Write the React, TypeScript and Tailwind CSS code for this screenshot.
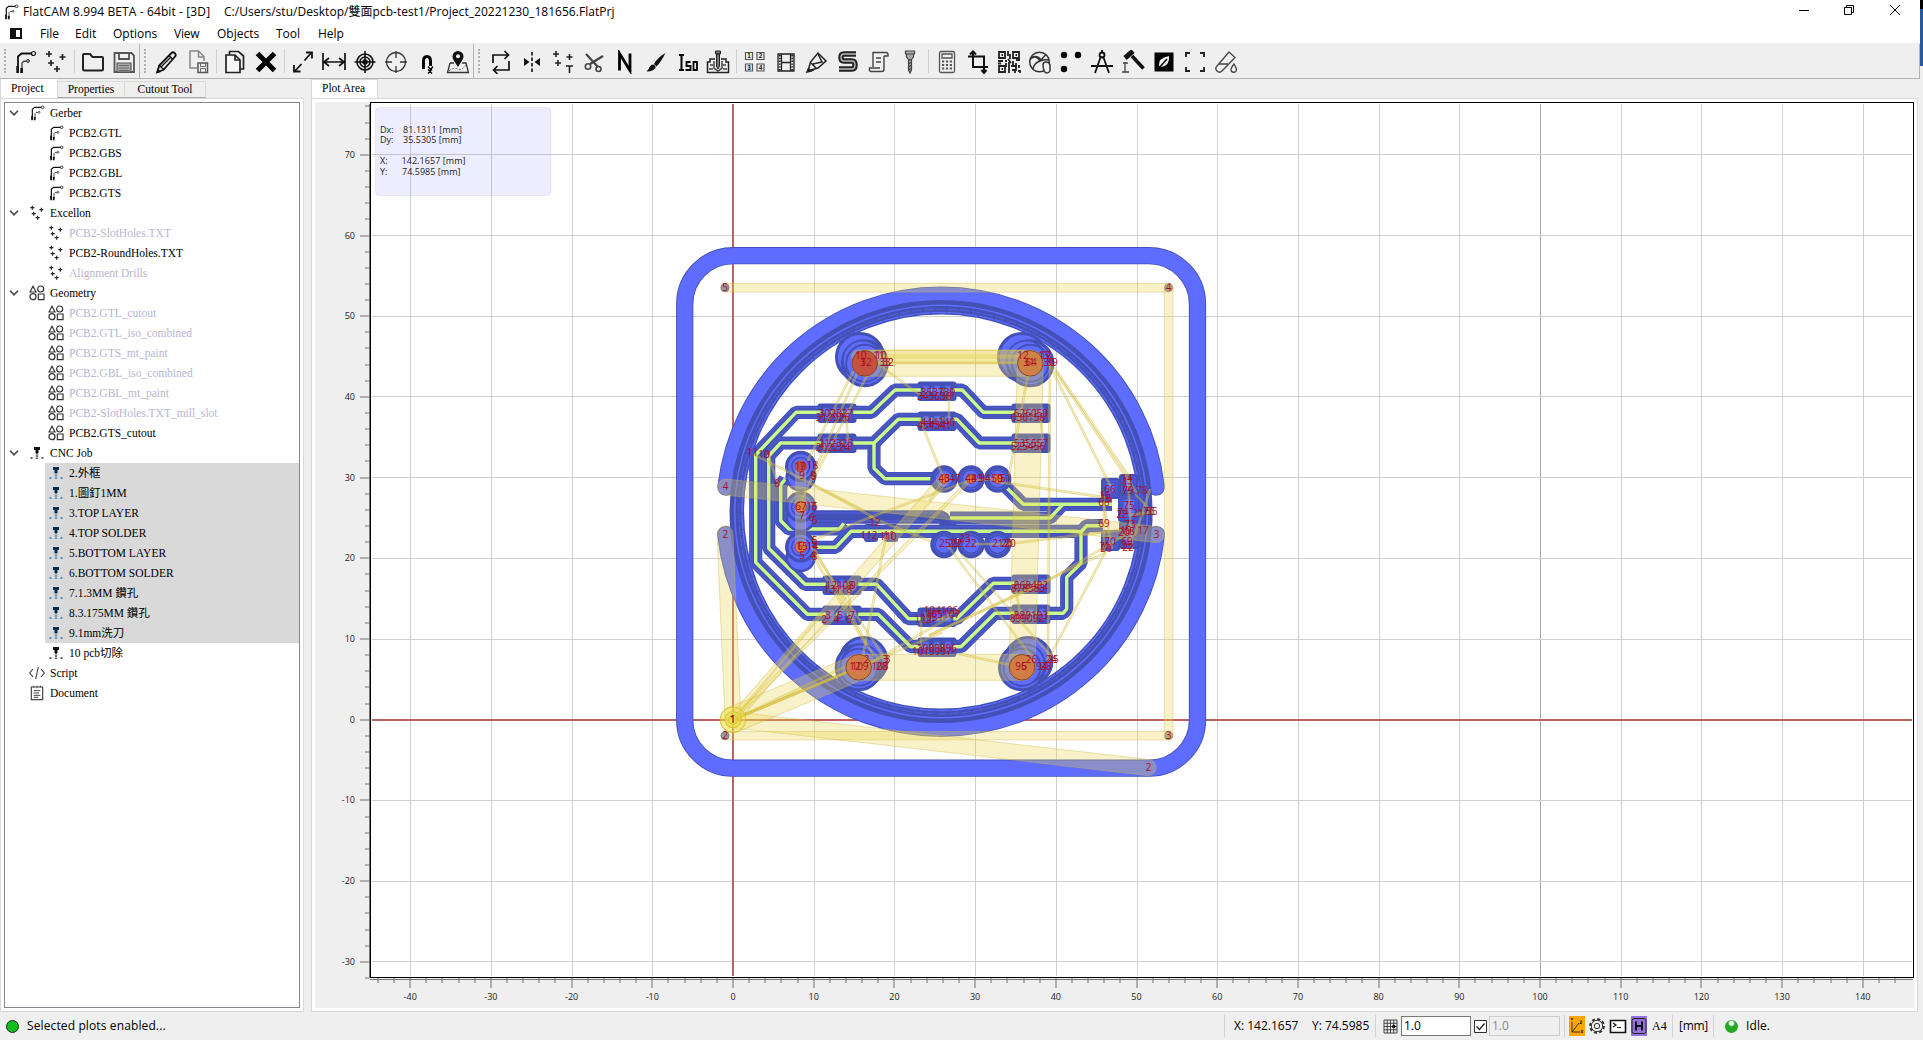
import React from 'react';

const UI = "font-['Open_Sans','Noto_Sans_CJK_TC',sans-serif]";
const SERIF = "font-['Liberation_Serif','Noto_Sans_CJK_TC',serif]";

/* ---------- icons ---------- */

const icons: Record<string, React.ReactNode> = {
  gerber: (
    <g fill="none" stroke="#111" strokeWidth="2">
      <circle cx="20.500" cy="3.500" r="2" strokeWidth="1.200" />
      <path d="M18.500 3.500H8.500L5 6.500V21" strokeWidth="1.800" />
      <circle cx="15" cy="11" r="1.400" strokeWidth="1" />
      <path d="M13.500 11.200h-2.700L9 13v8" stroke="#444" strokeWidth="1.400" />
      <path d="M4.600 16v7M8.600 18v5" strokeWidth="2.600" />
    </g>
  ),
  excellon: (
    <path d="M5 1v6M2 4h6M18.500 4v6M15.500 7h6M7 10v6M4 13h6M13 16v6M10 19h6" stroke="#222" strokeWidth="1.700" />
  ),
  open: <path d="M2 19V5q0-1 1-1h6l2.500 3H21q1 0 1 1v11q0 1.500-1.500 1.500h-17Q2 20.500 2 19z" fill="none" stroke="#222" strokeWidth="2" />,
  save: (
    <g fill="none" stroke="#555" strokeWidth="1.800">
      <path d="M2.500 3h17l2.500 2.500V22H2.500z" />
      <path d="M7 3v6h10V3" />
      <path d="M5 13h14v9H5z" fill="#aaa" strokeWidth="1.200" />
      <path d="M7 15.500h10M7 18h10M7 20.500h10" stroke="#666" strokeWidth="1" />
    </g>
  ),
  pencil: (
    <g fill="none" stroke="#111" strokeWidth="1.800">
      <path d="M2.500 22l1.700-6.500L16.500 3q1.500-1.500 3.300.2 1.700 1.800.3 3.300L8.500 19.800z" />
      <path d="M14 5.500l4 4M6 17L16 7M4 15.500l5 4" strokeWidth="1.400" />
      <path d="M2.300 22.200l2-.6-1.400-1.500z" fill="#111" />
    </g>
  ),
  filesave: (
    <g fill="none" stroke="#888" strokeWidth="1.500">
      <path d="M11 18H4V1h8.500L18 6.500V11" />
      <path d="M12.500 1v6H18" />
      <path d="M12 13h9.500v9.500H12z" stroke="#555" />
      <path d="M14.500 13v3.500h5V13M14.500 22v-3.500h5V22" stroke="#666" strokeWidth="1" />
    </g>
  ),
  copy: (
    <g fill="none" stroke="#222" strokeWidth="1.700">
      <path d="M3 22.500V5h9l5 5v12.500z" fill="#f6f6f6" />
      <path d="M12 5v5h5" />
      <path d="M6.500 5V1.500h9L20.500 6v13H17" />
    </g>
  ),
  del: <path d="M3.500 3.500l17 17M20.500 3.500l-17 17" stroke="#000" strokeWidth="5" />,
  fit: (
    <g stroke="#111" strokeWidth="1.800" fill="none">
      <path d="M3.500 21.500l7-7.500M13.500 10.500l7-8" />
      <path d="M15 2.500h6v6M3 15v6.500h6.500" />
    </g>
  ),
  dist: <path d="M1 3v17M23 3v17M2 12h20M7 8l-5 4 5 4M17 8l5 4-5 4" fill="none" stroke="#111" strokeWidth="1.700" />,
  target: (
    <g fill="none" stroke="#111" strokeWidth="1.600">
      <circle cx="12" cy="12" r="8" />
      <circle cx="12" cy="12" r="5" />
      <circle cx="12" cy="12" r="2" fill="#111" />
      <path d="M12 1v22M1.500 12h21" />
    </g>
  ),
  cross: (
    <g fill="none" stroke="#333" strokeWidth="1.300">
      <circle cx="12" cy="12" r="9.500" />
      <path d="M12 1v7M12 16v7M1 12h7M16 12h7" />
    </g>
  ),
  snap: (
    <g fill="none" stroke="#000" strokeWidth="3">
      <path d="M8.500 19v-8q0-4.500 3.500-4.500T15.500 11v5" />
      <path d="M13 16.500l2.500 3 2.500-3M13 23.500l4-4M13 19.500l4 4" strokeWidth="1.300" />
    </g>
  ),
  map: (
    <g>
      <path d="M4 13L1.500 22.500h21L20 13h-4M8 13H4" fill="none" stroke="#333" strokeWidth="1.300" />
      <path d="M3 21q5-4 9-2t8-4" fill="none" stroke="#666" strokeDasharray="2 1.500" />
      <path d="M12 17C9 12 6.500 9.500 6.500 6.500a5.500 5.500 0 0111 0C17.500 9.500 15 12 12 17z" fill="#111" />
      <circle cx="12" cy="6.300" r="2" fill="#efefef" />
    </g>
  ),
  twosided: (
    <path d="M4 13V5h15M15.500 1l4 4-4 4M20 11v9H5M8.500 16l-4 4 4 4" fill="none" stroke="#111" strokeWidth="1.700" />
  ),
  mirror: (
    <g>
      <path d="M12 2v20" stroke="#111" strokeWidth="1.600" strokeDasharray="3.500 2" />
      <path d="M4 8l5.500 4L4 16zM20 8l-5.500 4 5.500 4z" fill="#111" />
    </g>
  ),
  excT: (
    <g>
      <path d="M5 1v6M2 4h6M18.500 4v6M15.500 7h6M7 10v6M4 13h6" stroke="#222" strokeWidth="1.600" />
      <path d="M15 16h7M18.500 16v7" stroke="#222" strokeWidth="1.600" />
    </g>
  ),
  scissors: (
    <g fill="none" stroke="#444" strokeWidth="1.600">
      <path d="M4 4l12 13M21 6L8 14" strokeWidth="2.200" />
      <circle cx="6" cy="16.500" r="2.700" />
      <circle cx="16.500" cy="19" r="2.500" />
    </g>
  ),
  N: <path d="M6.500 20.500v-17L17 20.500v-17" fill="none" stroke="#000" strokeWidth="2.800" />,
  brush: (
    <g>
      <path d="M21.500 3Q13 8 10 14l2.500 2.500Q17 12 21.500 3z" fill="#111" />
      <path d="M9 14.500q3 1 2.500 3.500Q8 22 2.500 21.500 5 19.500 5.500 17 6.500 14.500 9 14.500z" fill="#111" />
    </g>
  ),
  iso: (
    <g fill="none" stroke="#000" strokeWidth="2">
      <path d="M4 5h5M4 20h5M6.500 5v15" />
      <path d="M15.500 12h-4v4h4v4h-5M18.500 12h3.500v8h-3.500z" strokeWidth="1.800" />
    </g>
  ),
  mill: (
    <g fill="none" stroke="#222" strokeWidth="1.500">
      <path d="M9 9H4v3H1.500v10.500h21V12H20V9h-5" />
      <path d="M8 11v7l4 3 4-3v-7M4 15h3M17 15h3M3 19h4M17 19h4" stroke="#444" />
      <path d="M9.500 1h5v3h-5zM10.500 4h3v12l-1.500 3-1.500-3z" fill="#777" stroke="#222" strokeWidth="1" />
    </g>
  ),
  panel: (
    <g>
      <path d="M2.500 2.500h7v7h-7zM14 2.500h7v7h-7zM2.500 14h7v7h-7zM14 14h7v7h-7z" fill="none" stroke="#555" strokeWidth="1.200" />
      <g fontSize="6.500" fontFamily="Liberation Sans" fontWeight="700" textAnchor="middle" fill="#111">
        <text x="6" y="8.300">1</text><text x="17.500" y="8.300">2</text>
        <text x="6" y="19.800">3</text><text x="17.500" y="19.800">4</text>
      </g>
    </g>
  ),
  film: (
    <g fill="none" stroke="#222">
      <path d="M4 4h16v17H4zM7.500 4v17M16.500 4v17M7.500 12.500h9" strokeWidth="1.300" />
      <path d="M5.700 5v16M18.300 5v16" strokeWidth="2" strokeDasharray="1.400 1.400" />
    </g>
  ),
  solder: (
    <g fill="none" stroke="#222" strokeWidth="1.500">
      <path d="M3 21l2.500-9L13 3l8 8-8 7z" />
      <path d="M13 4l4 8-9 2M6 13l5 5M3 21l6-1" />
      <path d="M2 22l4-1-2.500-2.500z" fill="#111" />
    </g>
  ),
  sub: (
    <g fill="none">
      <path d="M20 4H8Q5 4 5 7.500T8 11h8q3 0 3 4t-3 4H3" stroke="#222" strokeWidth="5.500" />
      <path d="M20 4H8Q5 4 5 7.500T8 11h8q3 0 3 4t-3 4H3" stroke="#bbb" strokeWidth="1.400" />
    </g>
  ),
  rules: (
    <g fill="none" stroke="#444" strokeWidth="1.400">
      <path d="M6 17V2.500h13q2.500 0 2 3.500h-4M17 6v13q0 2.500-2.500 2.500H4q-2 0-1.500-3.500H13" />
      <path d="M9 8h5M9 12h5" />
    </g>
  ),
  drill: (
    <g fill="#aaa" stroke="#444" strokeWidth="1.200">
      <path d="M7.500 1h9v3h-9zM8.500 4h7v3l-2 2.500h-3L8.500 7zM10.500 10h3v10L12 23l-1.500-3z" />
      <path d="M10.500 14l3-2M10.500 17l3-2M10.500 20l3-2" />
    </g>
  ),
  calc: (
    <g fill="none" stroke="#555" strokeWidth="1.300">
      <rect x="4.500" y="1.500" width="15" height="21" rx="1.500" />
      <path d="M7 4h10v4H7z" />
      <path d="M7 11.500h10M7 15h10M7 18.500h10" strokeWidth="2" strokeDasharray="2.200 1.700" />
    </g>
  ),
  crop: <path d="M7 2v15h15M2 6.500h16v15M4 4.500l3-3 3 3M15.500 20l2.500 3 2.500-3" fill="none" stroke="#111" strokeWidth="2" />,
  qr: (
    <g fill="none" stroke="#222" strokeWidth="1.800">
      <path d="M2 2h6v6H2zM16 2h6v6h-6zM2 16h6v6H2z" />
      <path d="M4.500 5h1.500M18.500 5H20M4.500 19H6M11 1v5M13 4v5M1 11h5M8 11h2M11 9l3 4M9 13v4M12 12v11M16 11v5M19 10h4M14 16h5M19 13v8M22 15v3M15 20h3v3M21 21h2v2M1 13.500h3" />
    </g>
  ),
  copper: (
    <g fill="none" stroke="#333" strokeWidth="1.500">
      <circle cx="11.500" cy="12" r="9.800" />
      <path d="M2.500 9Q8 4 12 11l6-6.500M12 11Q6 13 5 19M12 11q5-2 9-1M4 7q6-2 9 3" />
      <path d="M15 15q0-3 3-3t4 3v6q-1 2-3.500 2-3-.500-3.500-8z" fill="#efefef" />
    </g>
  ),
  fid: (
    <g fill="#000"><circle cx="5" cy="5" r="3.200" /><circle cx="19" cy="5" r="3.200" /><circle cx="5" cy="19" r="3.200" /></g>
  ),
  compass: (
    <g fill="none" stroke="#111" strokeWidth="1.800">
      <path d="M12 0v3M11 6L5 23M13 6l6 17M1 16h22" />
      <circle cx="12" cy="5" r="2.500" />
    </g>
  ),
  hammer: (
    <g fill="none" stroke="#111">
      <path d="M11 6l11.500 12.500" strokeWidth="3.600" />
      <path d="M4 8l8-7" strokeWidth="5" />
      <path d="M4 12v10M1 22h7M2 13h5" strokeWidth="1.300" stroke="#444" />
    </g>
  ),
  invert: (
    <g>
      <path d="M2.500 2.500h19v19h-19z" fill="#000" />
      <path d="M7 16Q6 8 17 6q1 10-8 11z" fill="#efefef" /><path d="M7 18L15 9" stroke="#000" strokeWidth="1.500" />
    </g>
  ),
  corners: <path d="M3 7V3h4M17 3h4v4M21 17v4h-4M7 21H3v-4" fill="none" stroke="#222" strokeWidth="1.900" />,
  etch: (
    <g fill="none" stroke="#444" strokeWidth="1.300">
      <path d="M15 2l6 5.500L8 21q-2.500 2.500-5 0t0-5z" />
      <path d="M5 14h9M20 14q-3 4-3 5.500a2.600 2.600 0 005.500 0Q22.500 18 20 14z" />
    </g>
  ),
  geometry: (
    <g fill="none" stroke="#333" strokeWidth="1.800">
      <path d="M1.500 10.500L6 2l4.500 8.500zM14 13.500h8.500V22H14z" />
      <circle cx="17.500" cy="6" r="4.500" /><circle cx="6" cy="17.500" r="4.500" />
    </g>
  ),
  script: <path d="M6 6l-5 6 5 6M18 6l5 6-5 6M14 3l-4 18" fill="none" stroke="#333" strokeWidth="1.600" />,
  document: (
    <g fill="none" stroke="#444" strokeWidth="1.800">
      <path d="M3.500 3h17v19h-17zM7 1v3M12 1v3M17 1v3" />
      <path d="M7 8.500h10M7 12h8M7 15.500h10M7 18.500h7" strokeWidth="1.500" />
    </g>
  ),
};

function Icon({ name, className = 'w-6 h-6' }: { name: string; className?: string }) {
  return <svg viewBox="0 0 24 24" className={'shrink-0 ' + className}>{icons[name]}</svg>;
}

function CncIcon({ selected }: { selected?: boolean }) {
  const c = selected ? '#0b2b4a' : '#111';
  return (
    <svg viewBox="0 0 16 16" className="w-4 h-4 shrink-0">
      <path d="M5 2h6v3H9.500v3h-3V5H5z" fill={c} />
      <path d="M8 8v6" stroke={selected ? '#5b8db8' : '#555'} strokeWidth="2.400" strokeDasharray="1.500 .7" />
      <path d="M1.500 12h2v2h-2zM12.500 12h2v2h-2z" fill={selected ? '#5b8db8' : '#666'} />
    </svg>
  );
}

/* ---------- toolbar ---------- */

const Sep = ({ w }: { w: 'w-[6px]' | 'w-[5px]' }) => (
  <div className={'flex shrink-0 justify-center ' + w}><div className="h-6 w-px bg-[#cfcfcf]" /></div>
);
const Handle = () => (
  <div className="flex w-3 shrink-0 items-center self-stretch">
    <div className="w-px self-stretch bg-[#b4b4b4]" />
    <div className="ml-1 h-6 border-l-2 border-dotted border-[#b0b0b0]" />
  </div>
);
const Tools = ({ names }: { names: string[] }) => (
  <>{names.map((n) => <div key={n} className="flex w-[31px] shrink-0 justify-center pt-[2px]"><Icon name={n} /></div>)}</>
);

function Toolbar() {
  return (
    <div className="flex h-[35px] w-[1920px] items-center border-r border-b border-[#b4b4b4] bg-[#efefef]">
      <div className="flex w-[9px] shrink-0 justify-center"><div className="h-6 border-l-2 border-dotted border-[#b0b0b0]" /></div>
      <Tools names={['gerber', 'excellon']} /><Sep w="w-[6px]" />
      <Tools names={['open', 'save']} /><Handle />
      <Tools names={['pencil', 'filesave']} /><Sep w="w-[6px]" />
      <Tools names={['copy', 'del']} /><Sep w="w-[6px]" />
      <Tools names={['fit', 'dist', 'target', 'cross', 'snap', 'map']} /><Handle />
      <Tools names={['twosided', 'mirror', 'excT', 'scissors', 'N', 'brush', 'iso', 'mill']} /><Sep w="w-[6px]" />
      <Tools names={['panel', 'film', 'solder', 'sub', 'rules', 'drill']} /><Sep w="w-[6px]" />
      <Tools names={['calc', 'crop', 'qr', 'copper', 'fid', 'compass', 'hammer', 'invert', 'corners', 'etch']} />
    </div>
  );
}

/* ---------- project tree ---------- */

type Item = { t: string; off?: boolean; sel?: boolean };
const groups: { t: string; icon: string; items: Item[] }[] = [
  { t: 'Gerber', icon: 'gerber', items: [{ t: 'PCB2.GTL' }, { t: 'PCB2.GBS' }, { t: 'PCB2.GBL' }, { t: 'PCB2.GTS' }] },
  { t: 'Excellon', icon: 'excellon', items: [{ t: 'PCB2-SlotHoles.TXT', off: true }, { t: 'PCB2-RoundHoles.TXT' }, { t: 'Alignment Drills', off: true }] },
  {
    t: 'Geometry', icon: 'geometry', items: [
      { t: 'PCB2.GTL_cutout', off: true }, { t: 'PCB2.GTL_iso_combined', off: true }, { t: 'PCB2.GTS_mt_paint', off: true },
      { t: 'PCB2.GBL_iso_combined', off: true }, { t: 'PCB2.GBL_mt_paint', off: true }, { t: 'PCB2-SlotHoles.TXT_mill_slot', off: true },
      { t: 'PCB2.GTS_cutout' },
    ],
  },
  {
    t: 'CNC Job', icon: 'cnc', items: [
      { t: '2.外框', sel: true }, { t: '1.圖釘1MM', sel: true }, { t: '3.TOP LAYER', sel: true }, { t: '4.TOP SOLDER', sel: true },
      { t: '5.BOTTOM LAYER', sel: true }, { t: '6.BOTTOM SOLDER', sel: true }, { t: '7.1.3MM 鑽孔', sel: true },
      { t: '8.3.175MM 鑽孔', sel: true }, { t: '9.1mm洗刀', sel: true }, { t: '10 pcb切除' },
    ],
  },
  { t: 'Script', icon: 'script', items: [] },
  { t: 'Document', icon: 'document', items: [] },
];

function Tree() {
  return (
    <div className={'flex-1 border border-[#828790] bg-white text-[11.5px] leading-5 ' + SERIF}>
      {groups.map((g) => (
        <div key={g.t}>
          <div className="flex h-5 items-center">
            <div className="flex w-[23px] justify-center pr-[5px]">
              {g.items.length > 0 && (
                <svg viewBox="0 0 10 6" className="h-1.5 w-2.5"><path d="M1 .8l4 4 4-4" fill="none" stroke="#444" strokeWidth="1.600" /></svg>
              )}
            </div>
            <div className="flex w-[22px] justify-center pr-1">{g.icon === 'cnc' ? <CncIcon /> : <Icon name={g.icon} className="h-4 w-4" />}</div>
            <span className="whitespace-pre">{g.t}</span>
          </div>
          {g.items.map((it) => (
            <div key={it.t} className="flex h-5 pl-10">
              <div className={'flex flex-1 items-center ' + (it.sel ? 'bg-[#d9d9d9]' : '')}>
                <div className="ml-[3px] mr-[5px] flex w-4 justify-center">
                  {g.icon === 'cnc' ? <CncIcon selected={it.sel} /> : <Icon name={g.icon} className="h-4 w-4" />}
                </div>
                <span className={'whitespace-pre ' + (it.off ? 'text-[#b6b6d0]' : 'text-black')}>{it.t}</span>
              </div>
            </div>
          ))}
        </div>
      ))}
    </div>
  );
}

/* ---------- plot ---------- */

const px = (v: number) => 733 + v * 8.07;
const py = (v: number) => 719.7 - v * 8.07;
const range = (a: number, b: number, s: number) => Array.from({ length: Math.floor((b - a) / s) + 1 }, (_, i) => a + i * s);

const traces = [
  'M1103 525.7H1086.700L1081 532V563.300L1066.700 577.300V609L1063 613.300H995L961 646.700H910.700L878.300 614.300H807.300L755.700 562.300V455L796 412.300H871.700L895 390H962.300L983.300 412.300H1045',
  'M1045 583.300H993.300L956.700 618.700H908.300L876.700 584.300H805L768.700 548.300V456L780.700 443H874L898.300 419.300H957L979.300 443H1045',
  'M874 443V468.300L885 478.700H944',
  'M785 479.300L780.700 485V520.700L789 529H839.300L844 523.300',
  'M815 547.300H835.700L851 531.300H1077L1081 532',
  'M950 518H1050L1063 504.300M998 479L1023.300 504.300H1112',
];

const pads: [number, number][] = [
  [937, 391], [937, 421], [837, 413], [837, 443], [1031, 413], [1031, 443], [842, 585], [842, 615], [937, 617], [937, 647], [1031, 584], [1031, 614],
];
const bigHoles: [number, number, number, number, string][] = [
  [860, 357, 864.7, 363.3, '#c4523f'], [1022, 357, 1030.3, 363.3, '#cf8044'], [863.5, 661, 858.7, 667.3, '#cf7d48'], [1028.500, 661, 1022, 667.3, '#cf7d44'],
];
const smallHoles: [number, number, boolean][] = [
  [800.7, 466.500, true], [800.7, 507, true], [800.7, 547, true], [944, 479, true], [971, 479, true], [997.7, 479, true],
  [944, 544.500, false], [971, 544.500, false], [997.500, 544.500, false],
];
const travels: [number, number, number, number, number][] = [
  [725, 287.700, 1168.600, 287.700, 8.700], [1168.600, 287.700, 1168.600, 735.700, 8.700], [725, 735.700, 1168.600, 735.700, 8.300],
  [733, 719.700, 1148, 767.500, 16], [733, 719.700, 725, 534, 16], [726, 487, 1156, 534.500, 16],
  [733, 719.700, 858.700, 667.300, 26], [858.700, 667.300, 1022, 667.300, 26], [1022, 667.300, 1030.300, 363.300, 26], [1030.300, 363.300, 864.700, 363.300, 26],
  [733, 719.700, 944, 479, 10], [733, 719.700, 971, 479, 3], [858, 356.500, 1030, 356.500, 3], [858, 356.500, 1022, 356.500, 13], [800.700, 466, 800.700, 547, 10],
];
const thin: [number, number, number, number][] = [
  [733, 719.7, 822, 614], [733, 719.7, 858, 667], [733, 719.7, 872, 662], [733, 719.7, 866, 657], [733, 719.7, 941, 633], [872, 662, 950, 617],
  [853, 372, 808, 460], [872, 366, 813, 480], [862, 362, 802, 500], [878, 364, 920, 395], [846, 412, 848, 441], [920, 420, 944, 479],
  [755, 455, 863, 510], [813, 485, 873, 517], [768, 455, 778, 483], [815, 550, 873, 655], [811, 547, 886, 660], [813, 556, 866, 645],
  [871, 517, 813, 540], [871, 517, 971, 480], [886, 536, 863, 655], [848, 585, 851, 612], [921, 622, 921, 645], [938, 620, 958, 610],
  [949, 394, 949, 417], [1030, 364, 1009, 475], [1050, 364, 1048, 660], [1041, 420, 1043, 440], [1053, 366, 1128, 475], [1056, 372, 1136, 492],
  [1049, 364, 1110, 485], [998, 482, 1103, 497], [971, 480, 1000, 479], [944, 479, 930, 500], [948, 546, 1030, 655], [962, 555, 1050, 655],
  [975, 544, 1010, 544], [1008, 544, 1120, 530], [1105, 553, 1048, 660], [1105, 553, 930, 635], [1128, 533, 1046, 582], [1046, 582, 930, 635],
  [1104, 497, 1104, 550], [1136, 495, 1152, 512], [1131, 515, 1152, 512], [1016, 592, 1020, 612], [960, 654, 1020, 667], [930, 541, 870, 517],
  [1128, 478, 1132, 550], [1150, 490, 1135, 535], [1104, 506, 1112, 548], [864, 363, 1030, 363],
];

const labels: [number, number, string][] = [
  [725, 287.700, '5'], [725.700, 487, '4'], [860.700, 356, '10'], [879, 356, '11'], [881, 356, '10'], [866, 363, '32'], [863, 363, '1'], [885, 363, '33'], [888, 363, '32'],
  [836, 414, '302827'], [833, 417.500, '312926'], [836, 443.500, '212325'], [833, 447.300, '202224'], [752.500, 452.700, '11'], [764, 455, '10'], [767, 454.500, '9'],
  [777, 483.500, '8'], [800.500, 466.700, '19'], [802, 466.700, '7'], [812.500, 466, '18'], [802, 476, '9'], [813, 476, '8'], [814, 477, '9'],
  [801, 506.700, '67'], [812, 506.700, '16'], [813, 506.700, '7'], [802, 515.500, '7'], [811.500, 518, '6'], [814.500, 520.500, '6'],
  [802, 547, '15'], [800, 547, '6'], [812.500, 547, '14'], [814.500, 541, '5'], [814, 543.500, '5'], [802, 556, '5'], [813, 556, '4'], [814.500, 557, '8'],
  [938, 392.700, '353739'], [934.500, 396.300, '343638'], [938, 422.500, '444240'], [934.500, 426, '454341'],
  [1023, 356, '12'], [1044, 356, '13'], [1046, 356, '12'], [1031, 363, '64'], [1029, 363, '31'], [1049, 363, '30'], [1052, 363, '39'],
  [1031, 414, '626059'], [1028, 417.500, '636158'], [1031, 443.500, '535557'], [1028, 447, '525456'],
  [944, 479, '46'], [947, 479, '3'], [955, 479, '47'], [971, 479, '48'], [977, 479, '49'], [985, 479, '94'], [997, 479, '50'], [1000, 479, '9'], [1006, 479, '51'],
  [1110, 490, '66'], [1105, 496, '16'], [1106, 498.500, '15'], [1104, 503, '68'], [1127, 479, '14'], [1128, 482, '11'], [1127, 487.500, '72'], [1128, 491, '79'], [1142, 491, '78'], [1129, 506, '75'],
  [1123, 513, '74'], [1122, 515, '22'], [1138, 514, '21'], [1149, 511.500, '76'], [1152, 512, '55'], [1104, 524, '69'], [1130, 525, '73'], [1126, 531, '19'], [1124, 533, '20'], [1129, 532, '18'], [1143, 531, '17'],
  [1110, 542, '70'], [1105, 547, '71'], [1106, 549, '20'], [1127, 542, '69'], [1127, 546, '25'], [1128, 548, '22'], [1156.500, 534.500, '3'], [725.300, 534.500, '2'],
  [875, 522.500, '12'], [869, 536, '112'], [888, 537, '110'], [889, 536, '11'], [945, 544, '25'], [954, 544, '29'], [957, 544, '22'], [965, 538.500, '23'], [971, 544, '22'], [998, 544, '21'], [1007, 544, '20'], [1010, 544, '20'],
  [840, 586, '12108'], [853, 586, '9'], [838, 589.500, '13118'], [828, 616, '3'], [840, 616, '5'], [852, 616, '7'], [824, 619.500, '2'], [836.500, 619.500, '4'], [849, 619.500, '6'],
  [1031, 585.500, '868482'], [1028, 589, '878583'], [1031, 616, '889193'], [1027, 619, '899092'],
  [941, 611, '104106'], [943, 615, '105107'], [923, 619.500, '102'], [929, 618, '103'], [937, 649, '1009896'], [932, 652, '1019997'],
  [866.500, 660, '2'], [885, 660, '3'], [887.500, 660, '3'], [860, 667, '109'], [855, 667, '12'], [880, 667, '108'], [882, 667, '28'],
  [1031.500, 660, '26'], [1051, 660, '24'], [1053, 660, '25'], [1021, 667, '95'], [1024, 667, '6'], [1042, 667, '94'], [1046, 667, '28'],
  [725, 736, '2'], [1168.600, 287.700, '4'], [1168.600, 735.700, '3'], [1148.500, 767.500, '2'],
];

const DARK = '#4350b6';
const BLUE = '#5e6dff';

function Bar({ v, w }: { v: [number, number, number, number]; w: number }) {
  const [x1, y1, x2, y2] = v;
  const len = Math.hypot(x2 - x1, y2 - y1);
  const a = (Math.atan2(y2 - y1, x2 - x1) * 180) / Math.PI;
  return <rect x={-w / 2} y={-w / 2} width={len + w} height={w} rx={w / 2} transform={`translate(${x1} ${y1}) rotate(${a})`} />;
}

function Plot() {
  const majorX = range(-40, 140, 10);
  const majorY = range(-30, 70, 10);
  return (
    <svg viewBox="315 102 1600 906" className="h-[906px] w-[1600px] shrink-0">
      <path d="M315 102h1600v906H315z" fill="#efefef" />
      <path d="M370 102h1545v906h-0.500V978H370z" fill="#fff" />
      <g shapeRendering="crispEdges">
        {majorX.map((v) => <path key={v} d={`M${Math.round(px(v)) + 0.5} 104V976`} stroke={v === 100 ? '#a8a8a8' : '#cfcfcf'} />)}
        {majorY.map((v) => <path key={v} d={`M372 ${Math.floor(py(v)) + 0.5}H1912`} stroke="#cfcfcf" />)}
        <path d="M733 104V976M372 720H1912" stroke="#bd6262" strokeWidth="2" />
        {range(-32, 76, 2).map((v) => <path key={v} d={`M${v % 10 === 0 ? 360 : 365} ${py(v)}H369`} stroke="#b0b0b0" strokeWidth="2" />)}
        {range(-44, 144, 2).map((v) => <path key={v} d={`M${px(v)} 978V${v % 10 === 0 ? 988 : 983}`} stroke="#b0b0b0" strokeWidth="2" />)}
        <path d="M369.500 104V978M370 979.500H1913" stroke="#777" />
        <path d="M370.500 977.500V102.500H1913.500V977.500z" fill="none" stroke="#000" />
      </g>
      <g fontSize="9" fontFamily="Open Sans" fill="#222">
        {majorY.map((v) => <text key={v} x="355" y={py(v) + 3} textAnchor="end">{v}</text>)}
        {majorX.map((v) => <text key={v} x={px(v)} y="999.800" textAnchor="middle">{v}</text>)}
      </g>

      {/* board outline and circular cutout */}
      <g fill="none" strokeLinecap="round">
        {[[17.3, DARK], [15.5, BLUE]].map(([w, c]) => (
          <g key={c} stroke={c as string} strokeWidth={w as number}>
            <rect x="684.700" y="255.700" width="512.800" height="512.500" rx="48.500" />
            <path d="M726 487A216.500 216.500 0 011156.200 487M725.800 534.500A216.500 216.500 0 001156.400 534.500" />
          </g>
        ))}
        <circle cx="941.100" cy="511.500" r="204.300" stroke={DARK} strokeWidth="14.500" />
        <circle cx="941.100" cy="511.500" r="206.300" stroke={BLUE} strokeWidth="1.500" />
        <circle cx="941.100" cy="511.500" r="202.300" stroke={BLUE} strokeWidth=".6" strokeDasharray="9 3" />
        <circle cx="941.100" cy="511.500" r="199" stroke={BLUE} strokeWidth="1.300" strokeDasharray="14 2" />
      </g>

      {/* pads */}
      <g stroke={DARK} strokeWidth="2">
        {pads.map(([x, y]) => (
          <g key={`${x}-${y}`} fill="#4a57cc">
            <rect x={x - 18.5} y={y - 8.5} width="37" height="17.500" rx="2" />
          </g>
        ))}
        {[[1102, 479, 17, 19], [1120, 475, 17, 19], [1119, 495, 20, 26], [1102, 531, 17, 19], [1120, 522, 18, 26], [865, 525, 12, 16], [885, 525, 12, 16]].map(([x, y, w, h]) => (
          <g key={`${x}-${y}`}>
            <rect x={x} y={y} width={w} height={h} rx="2" fill="#4a57cc" />
            <rect x={x + 4} y={y + 4} width={w - 8} height={h - 8} fill={BLUE} strokeWidth="1" />
          </g>
        ))}
      </g>

      {/* traces */}
      <g fill="none" strokeLinejoin="bevel">
        <path d="M815 517H942L958 538" stroke={DARK} strokeWidth="13.500" />
        <path d="M815 513H942L962 535M815 521H938L954 541" stroke={BLUE} strokeWidth=".6" />
        {[[13.2, DARK], [10.6, '#5764e6'], [9.400, DARK], [7.8, '#4f5bd0'], [6.4, DARK], [3.4, '#cbfa8c']].map(([w, c], i) =>
          traces.map((d) => <path key={d + i} d={d} stroke={c as string} strokeWidth={w as number} />),
        )}
      </g>

      {/* component pads over the traces */}
      {pads.map(([x, y]) => (
        <path key={`${x}-${y}`} d={`M${x - 15} ${y - 6.500}h8v13h-8zM${x - 4} ${y - 6.500}h8v13h-8zM${x + 7} ${y - 6.500}h8v13h-8z`} fill={BLUE} stroke={DARK} strokeWidth="2.500" opacity=".85" />
      ))}
      <g fill={BLUE} stroke={DARK} strokeWidth="2.500">
        {bigHoles.map(([ax, ay, bx, by]) => (
          <g key={ax}>
            <circle cx={ax} cy={ay} r="23.500" strokeWidth="3" />
            <circle cx={bx} cy={by} r="22.500" strokeWidth="3" />
            <circle cx={(ax + bx) / 2} cy={(ay + by) / 2} r="19.500" strokeWidth="1.800" />
            <circle cx={bx} cy={by} r="18.500" strokeWidth="2" />
          </g>
        ))}
        {smallHoles.map(([x, y]) => (
          <g key={`${x}-${y}`}>
            {x < 850 && <circle cx={x} cy={y + 10} r="14" />}
            <circle cx={x} cy={y} r={x < 850 ? 14 : 12} strokeWidth="3.400" />
            <circle cx={x} cy={y} r="9" strokeWidth="1.600" />
          </g>
        ))}
        {[[725, 287.7], [1168.6, 287.7], [1168.6, 735.7], [725, 735.7]].map(([x, y]) => <circle key={`${x}${y}`} cx={x} cy={y} r="4" fill="#7780c0" strokeWidth="1" />)}
      </g>

      {/* travel moves */}
      <g fill="rgba(235,213,77,.31)" stroke="rgba(205,185,70,.4)" strokeWidth="1">
        {travels.map(([a, b, c, d, w], i) => <Bar key={i} v={[a, b, c, d]} w={w} />)}
      </g>
      <g fill="rgba(225,203,67,.32)" stroke="rgba(205,185,60,.45)" strokeWidth=".8">
        {thin.map((v, i) => <Bar key={i} v={v} w={1.8} />)}
      </g>

      {/* drills */}
      {bigHoles.map(([, , x, y, c]) => <circle key={x} cx={x} cy={y} r="12.800" fill={c} stroke="#85452c" strokeWidth="1" />)}
      {smallHoles.filter((h) => h[2]).map(([x, y], i) => (
        <circle key={x + y} cx={x} cy={y} r={x < 850 ? 5.6 : 4.4} fill={i === 0 ? '#bd5553' : '#d58442'} stroke="#b8402c" strokeWidth="1" />
      ))}
      <g fill="rgba(240,225,70,.4)" stroke="#cfbb35" strokeWidth=".8">
        <circle cx="733" cy="719.700" r="12.800" /><circle cx="733" cy="719.700" r="8" /><circle cx="733" cy="719.700" r="4.500" />
      </g>

      <g fontSize="10" fontFamily="Open Sans" fill="#ac0d22" textAnchor="middle">
        {labels.map(([x, y, t], i) => <text key={i} x={x} y={y + 3.3}>{t}</text>)}
        <text x="732.500" y="722.900" fill="#900" fontWeight="600">1</text>
      </g>

      {/* coordinates overlay */}
      <rect x="375.500" y="107.500" width="175.500" height="88" rx="4" fill="rgba(100,90,255,.11)" stroke="rgba(100,90,255,.1)" />
      <g fontSize="9" fontFamily="Open Sans" fill="#222">
        <text x="380" y="133">Dx:</text><text x="403" y="133" textLength="59">81.1311 [mm]</text>
        <text x="380" y="143.300">Dy:</text><text x="403" y="143.300" textLength="58.500">35.5305 [mm]</text>
        <text x="380" y="164.300">X:</text><text x="401.500" y="164.300" textLength="64">142.1657 [mm]</text>
        <text x="380" y="174.800">Y:</text><text x="402" y="174.800" textLength="58.500">74.5985 [mm]</text>
      </g>
    </svg>
  );
}

/* ---------- status bar ---------- */

const VSep = ({ className = '' }: { className?: string }) => <div className={'h-[22px] w-px shrink-0 bg-[#d2d2d2] ' + className} />;
const Led = ({ className }: { className: string }) => (
  <div className={'h-[13px] w-[13px] shrink-0 rounded-full ' + className} />
);

function StatusBar() {
  return (
    <div className={'flex h-[28px] items-center text-[12px] ' + UI}>
      <Led className="ml-[6px] border border-[#222] bg-[#0fbf1e]" />
      <span className="ml-2 w-[1197px] shrink-0 tracking-[0.12px]">Selected plots enabled...</span>
      <VSep />
      <span className="ml-[9px] w-[78px] shrink-0 whitespace-nowrap">X: 142.1657</span>
      <span className="w-[63px] shrink-0 whitespace-nowrap">Y: 74.5985</span>
      <VSep />
      <svg viewBox="0 0 15 15" className="ml-[7px] h-[15px] w-[15px] shrink-0">
        <path d="M1 1h13v13H1zM1 4.250h13M1 7.500h13M1 10.750h13M4.250 1v13M7.500 1v13M10.750 1v13" fill="none" stroke="#444" />
        <circle cx="10.750" cy="7.500" r="1.800" fill="#111" />
      </svg>
      <div className="ml-[3px] flex h-5 w-[70px] shrink-0 items-center border border-[#7a7a7a] bg-white pl-[2px] text-[12px]">1.0</div>
      <svg viewBox="0 0 13 13" className="ml-[3px] h-[13px] w-[13px] shrink-0"><path d="M.5.5h12v12H.5z" fill="#fff" stroke="#333" /><path d="M2.500 6.500l3 3 5-6" fill="none" stroke="#222" strokeWidth="1.300" /></svg>
      <div className="ml-[2px] flex h-5 w-[71px] shrink-0 items-center border border-[#ccc] pl-[2px] text-[#888]">1.0</div>
      <VSep className="ml-1" />
      <div className="ml-1 flex h-5 w-4 shrink-0 bg-[#ffa500]">
        <svg viewBox="0 0 16 20" className="h-5 w-4"><path d="M3 6v10h8M3 16l7-9M2 2l1 2 1-2M11 5h2l-2 2.500h2M12 14l2 3M14 14l-2 3" fill="none" stroke="#333" /></svg>
      </div>
      <svg viewBox="0 0 18 18" className="ml-[3px] h-[18px] w-[18px] shrink-0">
        <circle cx="9" cy="9" r="6.800" fill="none" stroke="#333" strokeWidth="2.200" strokeDasharray="3 2.340" />
        <circle cx="9" cy="9" r="5.700" fill="#efefef" stroke="#333" /><circle cx="9" cy="9" r="2.700" fill="none" stroke="#333" />
      </svg>
      <svg viewBox="0 0 18 15" className="ml-[3px] h-[15px] w-[18px] shrink-0"><path d="M1.500 1.500h15v12h-15z" fill="#fff" stroke="#111" strokeWidth="1.600" /><path d="M4 4l3 2-3 2M8 8.500h4" fill="none" stroke="#111" strokeWidth="1.200" /></svg>
      <div className="ml-1 flex h-5 w-4 shrink-0 items-center justify-center bg-[#9370db]">
        <svg viewBox="0 0 16 20" className="h-5 w-4"><rect x="1" y="2.500" width="14" height="15" rx="2" fill="none" stroke="#222" /><path d="M5 5.500v9M11 5.500v9M5 10h6" stroke="#111" strokeWidth="2" /></svg>
      </div>
      <span className={'ml-[5px] w-[20px] shrink-0 text-[12px] ' + SERIF}>A4</span>
      <VSep />
      <span className="ml-[6px] w-[34px] shrink-0 tracking-[-0.3px]">[mm]</span>
      <VSep />
      <Led className="ml-[11px] bg-[radial-gradient(circle_at_50%_25%,#fff_0_15%,#22a822_30%)]" />
      <span className="ml-[8px] tracking-[0.1px]">Idle.</span>
    </div>
  );
}

/* ---------- window ---------- */

export default function App() {
  return (
    <div className={'flex h-[1040px] w-[1923px] overflow-hidden bg-[#efefef] text-black ' + UI}>
      <div className="flex w-[1920px] shrink-0 flex-col">
        <div className="flex h-6 items-center bg-white pl-[3px] text-[12px]">
          <Icon name="gerber" className="h-4 w-4" />
          <span className="ml-1 w-[201px] shrink-0 whitespace-nowrap tracking-[0.11px]">FlatCAM 8.994 BETA - 64bit - [3D]</span>
          <span className="flex-1 whitespace-nowrap tracking-[0.03px]">C:/Users/stu/Desktop/雙面pcb-test1/Project_20221230_181656.FlatPrj</span>
          <svg viewBox="0 0 102 12" className="mr-[19px] -mt-1 h-3 w-[102px]">
            <path d="M0 6.500h10" stroke="#000" />
            <path d="M45.500 3.500h7v7h-7zM47.500 3.500v-2h7v7h-2M91 1l10 10M101 1L91 11" fill="none" stroke="#000" />
          </svg>
        </div>
        <div className="flex h-5 items-center border-b border-[#efefef] bg-white text-[12px]">
          <div className="ml-[10px] mr-[18px] h-[11px] w-3 border-2 border-l-[6px] border-[#111]" />
          <span className="w-[35px]">File</span>
          <span className="w-[38px]">Edit</span>
          <span className="w-[61px]">Options</span>
          <span className="w-[43px] tracking-[-0.2px]">View</span>
          <span className="w-[59px]">Objects</span>
          <span className="w-[42px]">Tool</span>
          <span>Help</span>
        </div>
        <Toolbar />

        <div className="flex h-[933px] shrink-0">
          <div className="flex w-[304px] shrink-0 flex-col">
            <div className={'flex h-[19px] items-end text-[11.5px] ' + SERIF}>
              <div className="flex h-[19px] w-[57px] items-center justify-start border-l border-[#d9d9d9] bg-white pl-[10px]">Project</div>
              <div className="flex h-[17px] w-[68px] items-center justify-center border border-[#d9d9d9] border-b-[#a8a8a8]">Properties</div>
              <div className="flex h-[17px] w-[81px] items-center justify-center border border-l-0 border-[#d9d9d9] border-b-[#a8a8a8]">Cutout Tool</div>
            </div>
            <div className="flex flex-1 border border-[#d9d9d9] bg-white p-[3px]">
              <Tree />
            </div>
          </div>
          <div className="ml-[7px] flex w-[1607px] shrink-0 flex-col">
            <div className={'flex h-[19px] text-[11.5px] ' + SERIF}>
              <div className="flex h-[19px] w-[67px] items-center border border-b-0 border-[#d9d9d9] bg-white pl-[10px]">Plot Area</div>
            </div>
            <div className="flex flex-1 border border-[#d9d9d9] bg-white p-[3px]">
              <Plot />
            </div>
          </div>
        </div>
        <StatusBar />
      </div>
      <div className="flex w-[3px] flex-col">
        <div className="h-[9px] bg-black" />
        <div className="h-[57px] bg-[#2a569c]" />
      </div>
    </div>
  );
}
